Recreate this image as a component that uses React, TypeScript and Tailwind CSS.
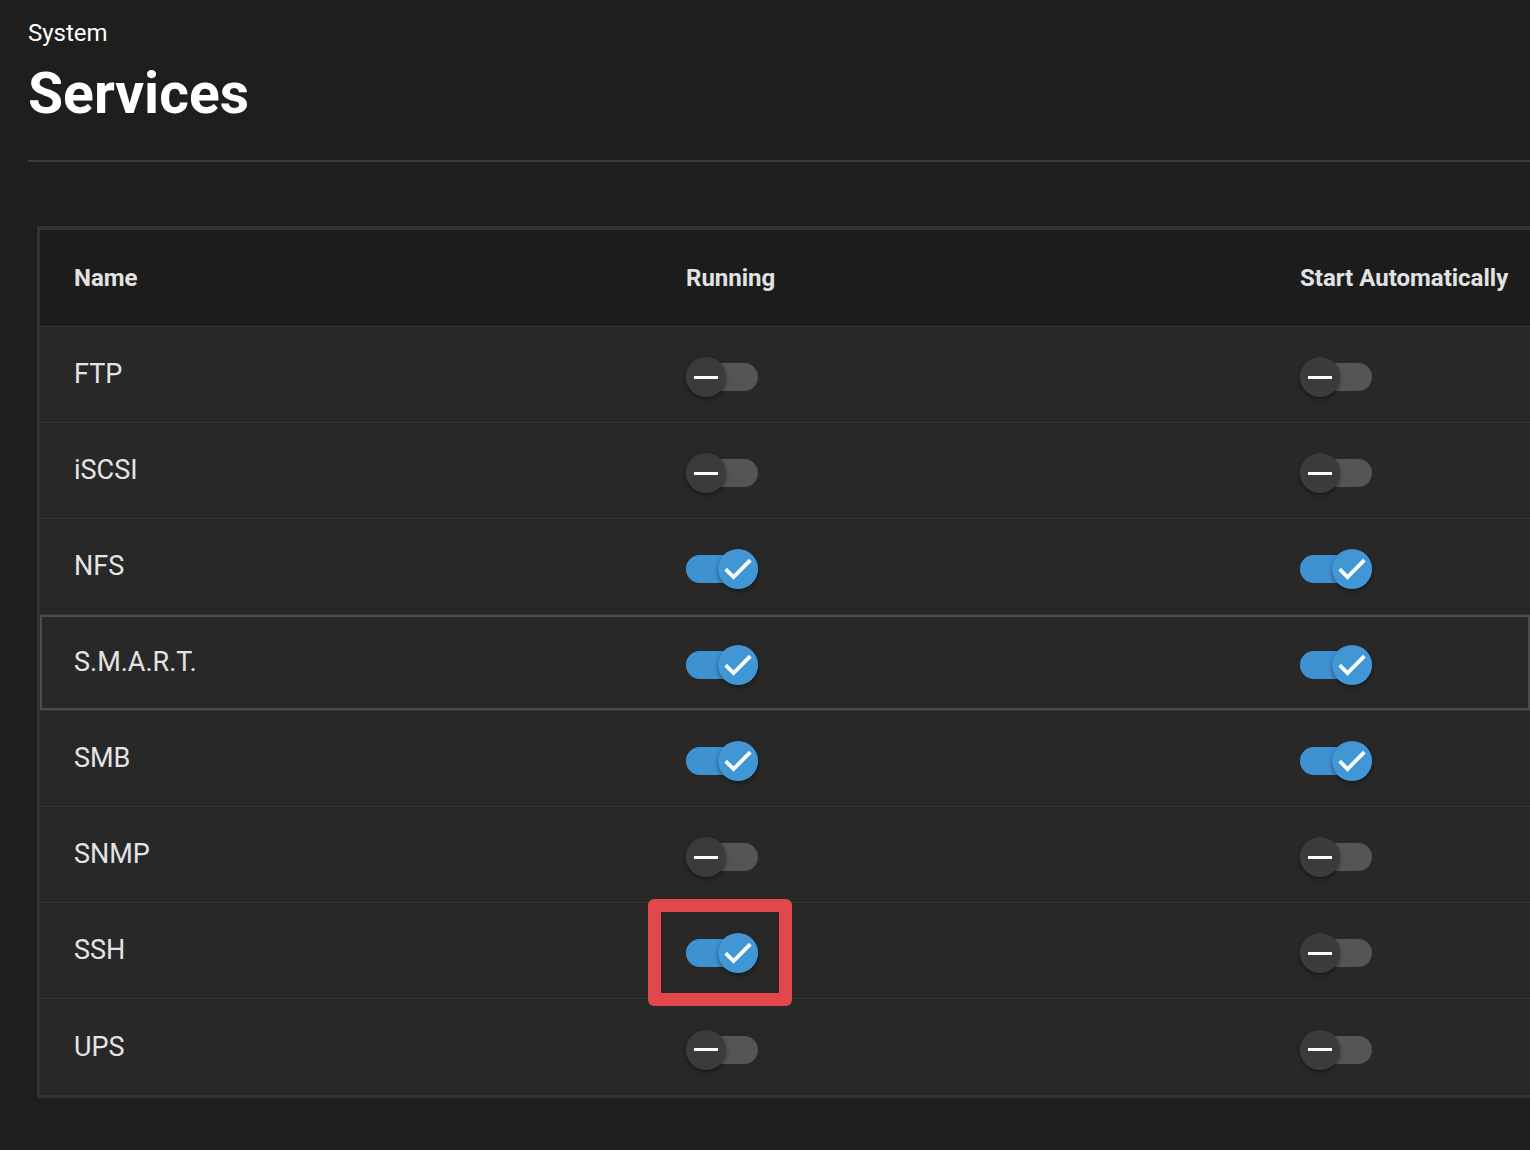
const services = [
  { name: 'FTP', running: false, auto: false },
  { name: 'iSCSI', running: false, auto: false },
  { name: 'NFS', running: true, auto: true },
  { name: 'S.M.A.R.T.', running: true, auto: true, selected: true },
  { name: 'SMB', running: true, auto: true },
  { name: 'SNMP', running: false, auto: false },
  { name: 'SSH', running: true, auto: false, marked: true },
  { name: 'UPS', running: false, auto: false },
];

function Toggle({ on, marked }: { on: boolean; marked?: boolean }) {
  return (
    <div className="relative w-[72px] h-10 mt-[5px]">
      <div className={`absolute left-0 right-0 top-[6px] h-7 rounded-full ${on ? 'bg-[#3f92d2]' : 'bg-[#555555]'}`} />
      <div
        className={`absolute top-0 w-10 h-10 rounded-full flex items-center justify-center shadow-[0_2px_4px_rgba(0,0,0,0.45)] ${
          on ? 'left-[32px] bg-[#4196d6]' : 'left-0 bg-[#3b3b3b]'
        }`}
      >
        {on ? (
          <svg width="40" height="40" viewBox="0 0 40 40" fill="none">
            <path d="M9 21.5 L15.5 28 L31 12.5" stroke="white" strokeWidth="3.8" strokeLinecap="square" />
          </svg>
        ) : (
          <div className="w-6 h-[3px] bg-white" />
        )}
      </div>
      {marked && (
        <div className="absolute left-[-38px] top-[-34px] w-[144px] h-[107px] border-[13px] border-[#e2474c] rounded-md" />
      )}
    </div>
  );
}

export default function App() {
  return (
    <div className="min-h-[1150px] w-[1530px] overflow-hidden bg-[#1e1e1e] pt-[19px] pl-[28px] font-['Roboto',sans-serif]">
      <div className="text-[24px] leading-[28px] text-white">System</div>
      <h1 className="mt-[18px] text-[57px] leading-none font-bold text-white">Services</h1>
      <div className="mt-[38px] h-[2px] bg-[#3a3a3a]" />

      <div className="mt-[64px] ml-[9px] border-l-[3px] border-t-[4px] border-b-[3px] border-[#333333]">
        <div className="flex items-center h-[97px] pl-[34px] bg-[#1c1c1c] border-b-[1px] border-[#333333] text-[24px] font-bold text-[#e2e2e2]">
          <div className="w-[612px]">Name</div>
          <div className="w-[614px]">Running</div>
          <div>Start Automatically</div>
        </div>
        {services.map((s, i) => (
          <div
            key={s.name}
            className={`flex items-center h-[96px] pl-[34px] bg-[#282828] text-[27px] text-[#e4e4e4] ${
              i < services.length - 1 ? 'border-b-[1px] border-[#333333]' : ''
            } ${s.selected ? 'ring-2 ring-inset ring-[#4d4d4d]' : ''}`}
          >
            <div className="w-[612px]">{s.name}</div>
            <div className="w-[614px]">
              <Toggle on={s.running} marked={s.marked} />
            </div>
            <div>
              <Toggle on={s.auto} />
            </div>
          </div>
        ))}
      </div>
    </div>
  );
}
